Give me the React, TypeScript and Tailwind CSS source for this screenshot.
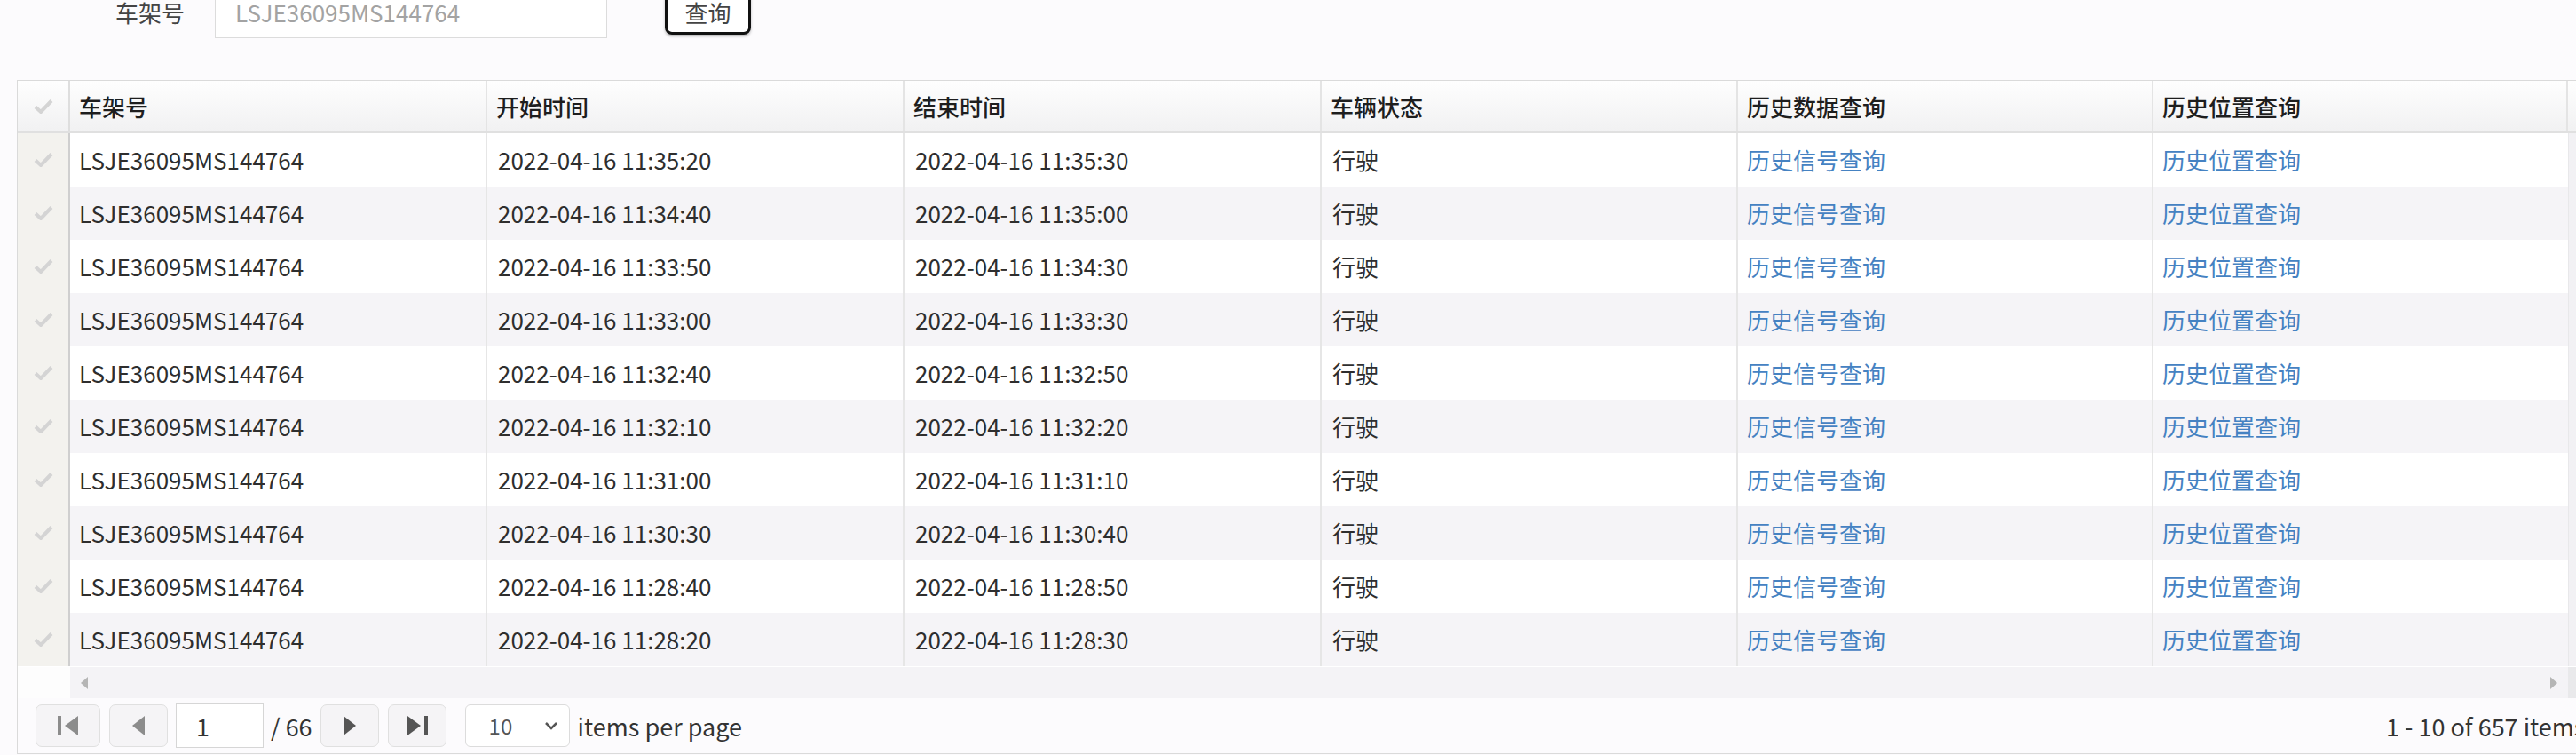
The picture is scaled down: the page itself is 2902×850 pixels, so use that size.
import React from "react";

const ROWS = [
  ["2022-04-16 11:35:20", "2022-04-16 11:35:30"],
  ["2022-04-16 11:34:40", "2022-04-16 11:35:00"],
  ["2022-04-16 11:33:50", "2022-04-16 11:34:30"],
  ["2022-04-16 11:33:00", "2022-04-16 11:33:30"],
  ["2022-04-16 11:32:40", "2022-04-16 11:32:50"],
  ["2022-04-16 11:32:10", "2022-04-16 11:32:20"],
  ["2022-04-16 11:31:00", "2022-04-16 11:31:10"],
  ["2022-04-16 11:30:30", "2022-04-16 11:30:40"],
  ["2022-04-16 11:28:40", "2022-04-16 11:28:50"],
  ["2022-04-16 11:28:20", "2022-04-16 11:28:30"],
];

const VIN = "LSJE36095MS144764";

// column widths incl. right border
const COLS = ["w-[470px]", "w-[470px]", "w-[470px]", "w-[469px]", "w-[468px]", "w-[467px]"];
const HEADERS = ["车架号", "开始时间", "结束时间", "车辆状态", "历史数据查询", "历史位置查询"];

function Check() {
  return (
    <svg width="22" height="18" viewBox="0 0 22 18" fill="none">
      <path d="M2 9.5 L8 15 L20 2.5" stroke="#d4d4d4" strokeWidth="4" strokeLinejoin="round" />
    </svg>
  );
}

function PagerButton({ children, wide }: { children: React.ReactNode; wide?: boolean }) {
  return (
    <div
      className={`${wide ? "w-[73px]" : "w-[66px]"} h-[48px] shrink-0 flex items-center justify-center rounded-[7px] border border-[#e0e0e0] bg-[#f5f4f6]`}
    >
      {children}
    </div>
  );
}

export default function App() {
  return (
    <div className="w-[2902px] h-[850px] overflow-hidden bg-[#fcfbfd] font-['Noto_Sans_CJK_SC',sans-serif] text-[#333]">
      {/* search bar */}
      <div className="flex items-center h-[58px] -mt-[15px]">
        <span className="ml-[130px] text-[26px] leading-none text-[#444]">车架号</span>
        <div className="ml-[34px] w-[442px] h-[58px] border border-[#dcdcdc] bg-white flex items-center pl-[22px]">
          <span className="text-[26px] leading-none text-[#a3a3a3]">{VIN}</span>
        </div>
        <button className="ml-[65px] w-[97px] h-[50px] border-[3px] border-[#111] rounded-[8px] bg-white shadow-[0_2px_3px_rgba(0,0,0,0.25)] text-[26px] leading-none text-[#444] flex items-center justify-center">
          查询
        </button>
      </div>

      {/* grid */}
      <div className="mt-[47px] ml-[19px] w-[2910px] border border-[#dadada] bg-[#fcfbfd]">
        {/* header */}
        <div className="flex h-[59px] border-b-2 border-[#e0e0e0] bg-gradient-to-b from-[#fefefe] to-[#f1f1f2]">
          <div className="w-[59px] shrink-0 border-r-2 border-[#dedede] flex items-center justify-center">
            <Check />
          </div>
          {HEADERS.map((h, i) => (
            <div
              key={h}
              className={`${COLS[i]} shrink-0 border-r-2 border-[#e4e4e4] flex items-center pl-[10px] text-[26px] leading-none font-medium text-[#1e1e1e]`}
            >
              {h}
            </div>
          ))}
          <div className="flex-1" />
        </div>

        {/* body */}
        {ROWS.map((r, idx) => (
          <div key={idx} className={`flex h-[60px] text-[#2e2e2e] ${idx % 2 ? "bg-[#f5f4f7]" : "bg-white"}`}>
            <div className="w-[59px] shrink-0 bg-[#f3f2ee] border-r-2 border-[#cfcfcf] flex items-center justify-center">
              <Check />
            </div>
            <div className={`${COLS[0]} shrink-0 border-r-2 border-[#e6e6e6] flex items-center pl-[10px] text-[26px] leading-none`}>
              {VIN}
            </div>
            <div className={`${COLS[1]} shrink-0 border-r-2 border-[#e6e6e6] flex items-center pl-[12px] text-[26px] leading-none`}>
              {r[0]}
            </div>
            <div className={`${COLS[2]} shrink-0 border-r-2 border-[#e6e6e6] flex items-center pl-[12px] text-[26px] leading-none`}>
              {r[1]}
            </div>
            <div className={`${COLS[3]} shrink-0 border-r-2 border-[#e6e6e6] flex items-center pl-[12px] text-[26px] leading-none`}>
              行驶
            </div>
            <div className={`${COLS[4]} shrink-0 border-r-2 border-[#e6e6e6] flex items-center pl-[10px] text-[26px] leading-none text-[#4582c2]`}>
              历史信号查询
            </div>
            <div className={`${COLS[5]} shrink-0 flex items-center pl-[10px] text-[26px] leading-none text-[#4582c2]`}>
              历史位置查询
            </div>
            <div className="flex-1 bg-[#f2f1f4] border-l border-[#e8e8ea]" />
          </div>
        ))}

        {/* horizontal scrollbar */}
        <div className="flex h-[36px] border-t border-white">
          <div className="w-[59px] shrink-0 bg-[#fdfdfd]" />
          <div className="w-[2814px] shrink-0 bg-[#f4f3f6] flex items-center justify-between px-[12px]">
            <svg width="8" height="14" viewBox="0 0 8 14"><path d="M8 0 L0 7 L8 14 Z" fill="#b5b5b5" /></svg>
            <svg width="8" height="14" viewBox="0 0 8 14"><path d="M0 0 L8 7 L0 14 Z" fill="#b5b5b5" /></svg>
          </div>
          <div className="flex-1 bg-[#e9e9eb]" />
        </div>

        {/* pager */}
        <div className="flex items-center h-[62px] pl-[20px] text-[27px] leading-none text-[#333]">
          <PagerButton wide>
            <svg width="26" height="24" viewBox="0 0 26 24">
              <rect x="1" y="1" width="4" height="22" fill="#8c8c8c" />
              <path d="M24 1 L9 12 L24 23 Z" fill="#8c8c8c" />
            </svg>
          </PagerButton>
          <div className="ml-[10px]">
            <PagerButton>
              <svg width="16" height="24" viewBox="0 0 16 24"><path d="M15 1 L1 12 L15 23 Z" fill="#8c8c8c" /></svg>
            </PagerButton>
          </div>
          <div className="ml-[9px] w-[99px] h-[50px] border border-[#d6d6d6] bg-white flex items-center pl-[22px]">1</div>
          <span className="ml-[8px]">/ 66</span>
          <div className="ml-[9px]">
            <PagerButton>
              <svg width="16" height="24" viewBox="0 0 16 24"><path d="M1 1 L15 12 L1 23 Z" fill="#555" /></svg>
            </PagerButton>
          </div>
          <div className="ml-[10px]">
            <PagerButton>
              <svg width="26" height="24" viewBox="0 0 26 24">
                <path d="M2 1 L17 12 L2 23 Z" fill="#555" />
                <rect x="21" y="1" width="4" height="22" fill="#555" />
              </svg>
            </PagerButton>
          </div>
          <div className="ml-[21px] w-[118px] h-[48px] rounded-[6px] border border-[#dcdcdc] bg-white flex items-center pl-[26px] pr-[12px] justify-between">
            <span className="text-[24px] text-[#555]">10</span>
            <svg width="16" height="10" viewBox="0 0 16 10" fill="none">
              <path d="M2 2 L8 8 L14 2" stroke="#555" strokeWidth="2.5" />
            </svg>
          </div>
          <span className="ml-[9px]">items per page</span>
          <span className="ml-auto w-[240px] whitespace-nowrap">1 - 10 of 657 items</span>
        </div>
      </div>
    </div>
  );
}
